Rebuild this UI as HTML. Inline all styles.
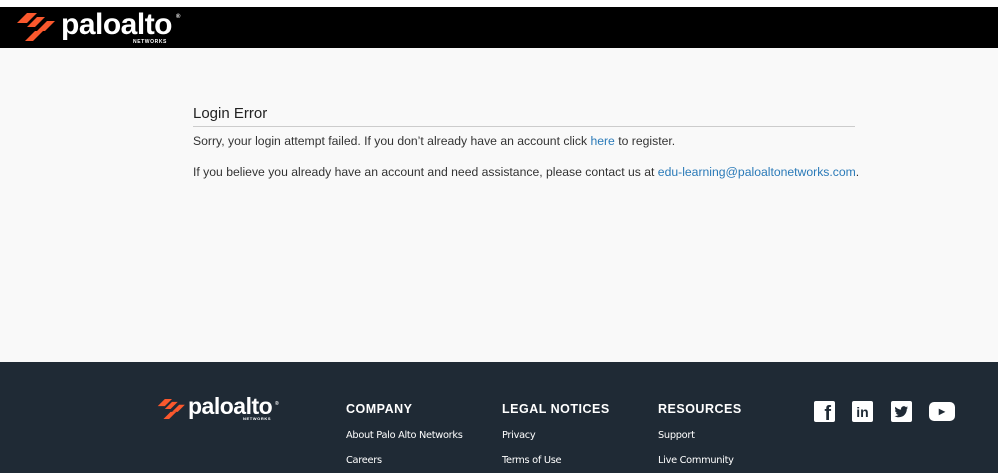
<!DOCTYPE html>
<html><head><style>
*{margin:0;padding:0;box-sizing:border-box}
body{width:998px;height:473px;overflow:hidden;background:#f9f9f9;font-family:"Liberation Sans",sans-serif;position:relative}
.top{position:absolute;left:0;top:0;width:998px;height:7px;background:#fff}
.hdr{position:absolute;left:0;top:7px;width:998px;height:41px;background:#000}
.logo{position:absolute;color:#fff;font-weight:bold;letter-spacing:-0.5px}
.net{position:absolute;color:#fff;font-weight:bold;font-size:5px;letter-spacing:0.6px}
h1{position:absolute;left:193px;top:105px;font-size:15px;font-weight:normal;color:#222}
.rule{position:absolute;left:193px;top:126px;width:662px;height:1px;background:#ccc}
p{position:absolute;left:193px;font-size:12.2px;color:#333}
a{color:#2a7ab8;text-decoration:none}
.ft{position:absolute;left:0;top:362px;width:998px;height:111px;background:#1f2a35}
.fh{position:absolute;top:402px;font-size:12.5px;color:#fff;letter-spacing:0.5px;font-family:"Liberation Sans",sans-serif;font-weight:bold;white-space:nowrap}
.fl{position:absolute;font-size:9.8px;color:#fff;font-family:"DejaVu Sans",sans-serif;white-space:nowrap;letter-spacing:-0.3px}
.ic{position:absolute;top:401px;width:21px;height:21px;background:#fff;border-radius:2px;color:#1f2a35;font-weight:bold;text-align:center}
</style></head><body>
<div class="top"></div>
<div class="hdr"></div>
<svg style="position:absolute;left:17px;top:13px" width="40" height="28" viewBox="0 0 40 28">
<g fill="#fa582d"><polygon points="10,0 20,0 10,10 0,10"/><polygon points="10,14 20,4 28,4 18,14"/><polygon points="20,18 30,8 38,8 28,18"/><polygon points="8,28 18,18 26,18 16,28"/></g></svg>
<div class="logo" style="left:61px;top:8px;font-size:30px">paloalto</div>
<div class="logo" style="left:176px;top:14px;font-size:6px">®</div>
<div class="net" style="left:133px;top:39px">NETWORKS</div>
<h1>Login Error</h1>
<div class="rule"></div>
<p style="top:134px">Sorry, your login attempt failed. If you don’t already have an account click <a>here</a> to register.</p>
<p style="top:165px">If you believe you already have an account and need assistance, please contact us at <a>edu-learning@paloaltonetworks.com</a>.</p>
<div class="ft"></div>
<svg style="position:absolute;left:157px;top:399px" width="30" height="20" viewBox="0 0 40 28">
<g fill="#fa582d"><polygon points="10,0 20,0 10,10 0,10"/><polygon points="10,14 20,4 28,4 18,14"/><polygon points="20,18 30,8 38,8 28,18"/><polygon points="8,28 18,18 26,18 16,28"/></g></svg>
<div class="logo" style="left:188px;top:393px;font-size:23px">paloalto</div>
<div class="logo" style="left:275px;top:401px;font-size:5px">®</div>
<div class="net" style="left:243px;top:416px;font-size:4px">NETWORKS</div>
<div class="fh" style="left:346px">COMPANY</div>
<div class="fh" style="left:502px">LEGAL NOTICES</div>
<div class="fh" style="left:658px">RESOURCES</div>
<div class="fl" style="left:346px;top:430px">About Palo Alto Networks</div>
<div class="fl" style="left:346px;top:455px">Careers</div>
<div class="fl" style="left:502px;top:430px">Privacy</div>
<div class="fl" style="left:502px;top:455px">Terms of Use</div>
<div class="fl" style="left:658px;top:430px">Support</div>
<div class="fl" style="left:658px;top:455px">Live Community</div>
<div class="ic" style="left:814px;font-size:20px;line-height:26px;text-align:right;padding-right:4px">f</div>
<div class="ic" style="left:852px;font-size:14px;line-height:22px">in</div>
<svg style="position:absolute;left:891px;top:401px" width="21" height="21" viewBox="0 0 21 21"><rect width="21" height="21" rx="2" fill="#fff"/><path d="M17 6.5c-.5.2-1 .4-1.6.4.6-.3 1-.9 1.2-1.5-.5.3-1.1.5-1.7.7a2.8 2.8 0 0 0-4.8 2.5C7.800 8.500 5.800 7.400 4.400 5.700c-.7 1.300-.3 2.900.9 3.700-.5 0-.9-.1-1.300-.3 0 1.400 1 2.600 2.300 2.800-.4.100-.9.100-1.300.1.400 1.100 1.400 1.900 2.600 1.900A5.600 5.600 0 0 1 3.500 15c1.300.8 2.700 1.300 4.300 1.300 5.200 0 8-4.300 8-8v-.4c.5-.4 1-.9 1.200-1.400z" fill="#1f2a35"/></svg>
<div class="ic" style="left:929px;top:402px;width:26px;height:19px;border-radius:5px;font-size:8px;line-height:19px">▶</div>
</body></html>
